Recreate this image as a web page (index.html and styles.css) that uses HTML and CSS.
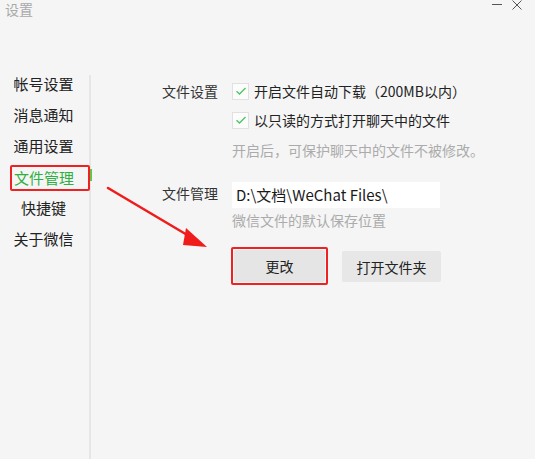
FILE: index.html
```html
<!DOCTYPE html>
<html lang="zh-CN">
<head>
<meta charset="utf-8">
<title>设置</title>
<link rel="stylesheet" href="styles.css">
</head>
<body>
<div class="window">
  <header class="titlebar">
    <span class="title">设置</span>
    <div class="controls">
      <svg class="ctl" width="10" height="10" viewBox="0 0 10 10"><path d="M0 4.5H10" stroke="#555" stroke-width="1"/></svg>
      <svg class="ctl" width="10" height="10" viewBox="0 0 10 10"><path d="M0.5 0.5L9.5 9.5M9.5 0.5L0.5 9.5" stroke="#555" stroke-width="1"/></svg>
    </div>
  </header>
  <div class="body">
    <nav class="sidebar">
      <div class="nav-item">帐号设置</div>
      <div class="nav-item">消息通知</div>
      <div class="nav-item">通用设置</div>
      <div class="nav-item active"><span class="mark">文件管理</span><i class="indicator"></i></div>
      <div class="nav-item">快捷键</div>
      <div class="nav-item">关于微信</div>
    </nav>
    <main class="main">
      <section class="group">
        <div class="label">文件设置</div>
        <div class="controls-col">
          <label class="check-row">
            <span class="box"><svg width="12" height="10" viewBox="0 0 12 10"><path d="M1.5 5.2L4.5 8L10.5 2" fill="none" stroke="#4cc763" stroke-width="1.4"/></svg></span>
            <span>开启文件自动下载（200MB以内）</span>
          </label>
          <label class="check-row second">
            <span class="box"><svg width="12" height="10" viewBox="0 0 12 10"><path d="M1.5 5.2L4.5 8L10.5 2" fill="none" stroke="#4cc763" stroke-width="1.4"/></svg></span>
            <span>以只读的方式打开聊天中的文件</span>
          </label>
          <div class="hint first-hint">开启后，可保护聊天中的文件不被修改。</div>
        </div>
      </section>
      <section class="group group2">
        <div class="label label2">文件管理</div>
        <div class="controls-col">
          <div class="path">D:\文档\WeChat Files\</div>
          <div class="hint path-hint">微信文件的默认保存位置</div>
          <div class="buttons">
            <div class="highlight"><button class="btn btn-change">更改</button></div>
            <button class="btn btn-open">打开文件夹</button>
          </div>
        </div>
      </section>
    </main>
  </div>
  <svg class="arrow" width="535" height="459" viewBox="0 0 535 459">
    <path d="M108 188L194 239" stroke="#f01c1c" stroke-width="2.6" stroke-linecap="round"/>
    <path d="M207 247L186 228L183 245Z" fill="#f01c1c"/>
  </svg>
</div>
</body>
</html>
```
FILE: styles.css
```css
* { box-sizing: border-box; }
html, body {
  margin: 0;
  padding: 0;
  background: #f5f5f5;
}
body {
  font-family: "Noto Sans CJK SC", "Noto Sans", sans-serif;
  color: #222;
  width: 535px;
  height: 459px;
  overflow: hidden;
}
.window {
  position: relative;
  width: 535px;
  height: 459px;
}
.titlebar {
  height: 66px;
  display: flex;
  justify-content: space-between;
  align-items: flex-start;
  padding: 1px 13px 0 5px;
}
.title {
  font-size: 14px;
  line-height: 16px;
  color: #a9a9a9;
}
.controls {
  display: flex;
  gap: 10px;
  margin-top: -1px;
}
.ctl { display: block; }
.body {
  display: flex;
  height: 393px;
}
.sidebar {
  width: 91px;
  flex: none;
  padding-top: 2px;
  background: linear-gradient(#e6e6e6, #e6e6e6) no-repeat;
  background-position: 89px 9px;
  background-size: 2px 100%;
}
.nav-item {
  height: 31px;
  line-height: 31px;
  font-size: 15px;
  text-align: center;
  padding-right: 4px;
  color: #222;
  position: relative;
}
.nav-item.active {
  color: #2fb040;
  text-align: left;
  padding: 0 0 0 10px;
}
.mark {
  display: inline-block;
  line-height: 18px;
  padding: 2px 14px 2px 2px;
  border: 2px solid #ee2222;
  border-radius: 2px;
  vertical-align: middle;
  margin-top: -2px;
}
.indicator {
  position: absolute;
  left: 90px;
  top: 8px;
  width: 2px;
  height: 12px;
  background: #62c54a;
}
.main {
  flex: 1;
  padding-left: 71px;
  padding-top: 15px;
  font-size: 14px;
}
.group {
  display: flex;
}
.label {
  width: 70px;
  flex: none;
  line-height: 20px;
  color: #333;
}
.controls-col {
  display: flex;
  flex-direction: column;
  align-items: flex-start;
}
.check-row {
  display: flex;
  align-items: center;
  gap: 5px;
  line-height: 20px;
  height: 20px;
  color: #222;
}
.check-row.second { margin-top: 9px; }
.box {
  width: 17px;
  height: 17px;
  border: 1px solid #e1e1e1;
  background: #fcfcfc;
  display: flex;
  align-items: center;
  justify-content: center;
}
.box svg { display: block; }
.hint {
  color: #ababab;
  line-height: 20px;
}
.first-hint { margin-top: 10px; }
.group2 { margin-top: 22px; }
.label2 { padding-top: 1px; }
.path {
  width: 208px;
  height: 26px;
  background: #fff;
  font-size: 15px;
  line-height: 26px;
  padding-left: 4px;
  color: #1a1a1a;
}
.path-hint { margin-top: 2px; }
.buttons {
  display: flex;
  align-items: flex-start;
  gap: 14px;
  margin-top: 17px;
  margin-left: -1px;
}
.highlight {
  border: 2px solid #ee2222;
  border-radius: 2px;
  padding: 1px;
}
.btn {
  font-family: inherit;
  font-size: 14px;
  color: #222;
  border: none;
  border-radius: 2px;
  height: 32px;
  padding: 0;
  display: block;
}
.btn-change {
  width: 91px;
  background: #e5e5e5;
}
.btn-open {
  width: 99px;
  height: 31px;
  margin-top: 4px;
  background: #e7e7e7;
}
.arrow {
  position: absolute;
  left: 0;
  top: 0;
  pointer-events: none;
}
```
